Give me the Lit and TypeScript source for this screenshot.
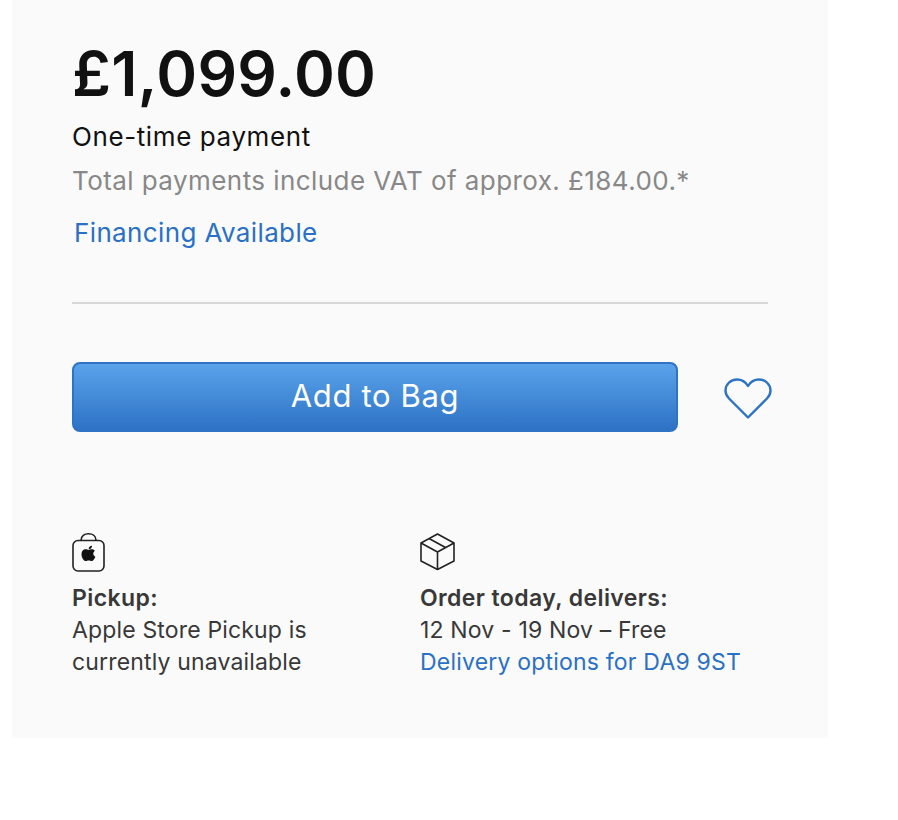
import { LitElement, html, css } from "lit";
import { customElement } from "lit/decorators.js";

@customElement("app-root")
export class AppRoot extends LitElement {
  static styles = css`
    :host { display: block; width: 898px; height: 820px; background: #fff; font-family: Inter, "Noto Sans", sans-serif; overflow: hidden; }
    .panel { box-sizing: border-box; margin-left: 12px; width: 816px; height: 738px; background: #fafafa; padding: 38px 60px 0; }
    .price { font-size: 62px; line-height: 72px; font-weight: 600; color: #111; letter-spacing: 0.3px; }
    .once { font-size: 26px; line-height: 32px; color: #111; margin-top: 11px; letter-spacing: 0.6px; }
    .vat { font-size: 26px; line-height: 32px; color: #888; margin-top: 12px; letter-spacing: 0.43px; }
    .fin { font-size: 26px; line-height: 32px; color: #2a70c5; margin: 20px 0 0 2px; letter-spacing: 0.37px; }
    hr { border: 0; height: 2px; background: #d6d6d6; margin: 53px 0 0; width: 696px; }
    .actions { display: flex; align-items: center; margin-top: 58px; }
    .btn { flex: none; box-sizing: border-box; width: 606px; height: 70px; border: 2px solid #2f73c4; border-radius: 8px; background: linear-gradient(#5aa3ea, #2d72c5); color: #fff; font: 400 31px/64px Inter, sans-serif; letter-spacing: 0.65px; text-align: center; padding: 0 0 2px; }
    .heart { flex: none; display: block; margin: 4px 0 0 46px; }
    .info { display: grid; grid-template-columns: 348px 1fr; margin-top: 101px; font-size: 23px; line-height: 32px; color: #383838; letter-spacing: 0.16px; }
    .ico { display: block; height: 40px; margin-bottom: 9px; }
    b { font-weight: 600; display: block; letter-spacing: 0.4px; }
    a { color: #2a70c5; text-decoration: none; letter-spacing: 0.2px; }
  `;
  render() {
    return html`<div class="panel">
      <div class="price">£1,099.00</div>
      <div class="once">One-time payment</div>
      <div class="vat">Total payments include VAT of approx. £184.00.*</div>
      <div class="fin">Financing Available</div>
      <hr />
      <div class="actions">
        <button class="btn">Add to Bag</button>
        <svg class="heart" width="48" height="42" viewBox="0 0 48 42" fill="none" stroke="#2d72c5" stroke-width="2.4" stroke-linejoin="round">
          <path d="M24 8 C21 3 17 1.500 13 1.500 C6.500 1.500 1.500 6.500 1.500 12.500 C1.500 16 3 18.500 5 20.500 L24 39.500 L43 20.500 C45 18.500 46.500 16 46.500 12.500 C46.500 6.500 41.500 1.500 35 1.500 C31 1.500 27 3 24 8 Z"/>
        </svg>
      </div>
      <div class="info">
        <div>
          <svg class="ico" width="34" height="40" viewBox="0 0 34 40" fill="none" stroke="#222" stroke-width="1.600">
            <rect x="1" y="7.500" width="31" height="30.500" rx="5"/>
            <path d="M9 7.500 C9 3 12.500 0.800 16.500 0.800 C20.500 0.800 24 3 24 7.500"/>
            <path transform="translate(-0.500 0)" fill="#111" stroke="none" d="M20.600 12.800 C20.700 14.700 19 16.300 17.200 16.200 C17 14.300 18.800 12.700 20.600 12.800 Z M17.200 17 C18.100 17 19.100 16.200 20.500 16.300 C21.700 16.300 22.700 16.900 23.400 17.800 C21 19.300 21.400 22.800 23.900 23.800 C23.200 25.700 21.700 28.100 20.200 28.100 C19 28.100 18.600 27.400 17.200 27.400 C15.800 27.400 15.300 28.100 14.200 28.100 C12.200 28.100 10 24.400 10 21.200 C10 18.200 11.900 16.300 13.900 16.300 C15.300 16.300 16.300 17 17.200 17 Z"/>
          </svg>
          <b>Pickup:</b>
          Apple Store Pickup is<br />currently unavailable
        </div>
        <div>
          <svg class="ico" width="36" height="40" viewBox="0 0 36 40" fill="none" stroke="#222" stroke-width="1.600" stroke-linejoin="round">
            <path d="M17.500 1 L34 10 V28 L17.500 36.500 L1 28 V10 Z"/>
            <path d="M1 10 L17.500 19 L34 10 M17.500 19 V36.500 M9 5.500 L25.500 14.500"/>
          </svg>
          <b>Order today, delivers:</b>
          12 Nov - 19 Nov – Free<br /><a>Delivery options for DA9 9ST</a>
        </div>
      </div>
    </div>`;
  }
}
